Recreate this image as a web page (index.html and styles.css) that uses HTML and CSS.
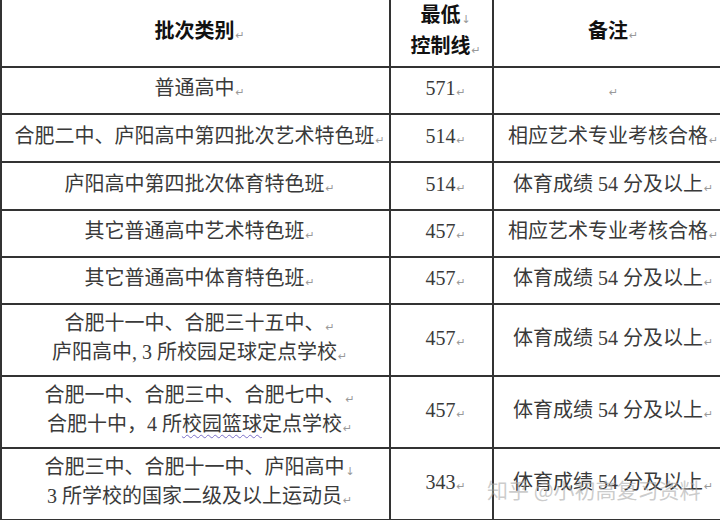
FILE: index.html
```html
<!DOCTYPE html>
<html lang="zh-CN">
<head>
<meta charset="utf-8">
<title>批次类别</title>
<link rel="stylesheet" href="styles.css">
</head>
<body>
<div class="page">
  <table class="grid">
    <colgroup><col class="c1"><col class="c2"><col class="c3"></colgroup>
    <tr class="r-head">
      <th>批次类别<span class="pm">↵</span></th>
      <th class="num">最低<span class="lb">↓</span><br>控制线<span class="pm">↵</span></th>
      <th>备注<span class="pm">↵</span></th>
    </tr>
    <tr class="r-s1">
      <td>普通高中<span class="pm">↵</span></td>
      <td class="num">571<span class="pm">↵</span></td>
      <td><span class="pm">↵</span></td>
    </tr>
    <tr class="r-s2">
      <td>合肥二中、庐阳高中第四批次艺术特色班<span class="pm">↵</span></td>
      <td class="num">514<span class="pm">↵</span></td>
      <td>相应艺术专业考核合格<span class="pm">↵</span></td>
    </tr>
    <tr class="r-s2">
      <td>庐阳高中第四批次体育特色班<span class="pm">↵</span></td>
      <td class="num">514<span class="pm">↵</span></td>
      <td>体育成绩 54 分及以上<span class="pm">↵</span></td>
    </tr>
    <tr class="r-s1">
      <td>其它普通高中艺术特色班<span class="pm">↵</span></td>
      <td class="num">457<span class="pm">↵</span></td>
      <td>相应艺术专业考核合格<span class="pm">↵</span></td>
    </tr>
    <tr class="r-s1">
      <td>其它普通高中体育特色班<span class="pm">↵</span></td>
      <td class="num">457<span class="pm">↵</span></td>
      <td>体育成绩 54 分及以上<span class="pm">↵</span></td>
    </tr>
    <tr class="r-d">
      <td class="two">合肥十一中、合肥三十五中、<span class="pm">↵</span><br>庐阳高中, 3 所校园足球定点学校<span class="pm">↵</span></td>
      <td class="num">457<span class="pm">↵</span></td>
      <td>体育成绩 54 分及以上<span class="pm">↵</span></td>
    </tr>
    <tr class="r-d">
      <td class="two">合肥一中、合肥三中、合肥七中、<span class="pm">↵</span><br>合肥十中，4 所<span class="wavy">校园篮球</span>定点学校<span class="pm">↵</span></td>
      <td class="num">457<span class="pm">↵</span></td>
      <td>体育成绩 54 分及以上<span class="pm">↵</span></td>
    </tr>
    <tr class="r-d">
      <td class="two">合肥三中、合肥十一中、庐阳高中<span class="lb">↓</span><br>3 所学校的国家二级及以上运动员<span class="pm">↵</span></td>
      <td class="num">343<span class="pm">↵</span></td>
      <td>体育成绩 54 分及以上<span class="pm">↵</span></td>
    </tr>
  </table>
  <div class="watermark">知乎 @小初高复习资料</div>
</div>
</body>
</html>
```
FILE: styles.css
```css
html, body {
  margin: 0;
  padding: 0;
  background: #fff;
}
body {
  width: 720px;
  height: 520px;
  overflow: hidden;
}
.page {
  position: relative;
  width: 720px;
  height: 520px;
  overflow: hidden;
}
.grid {
  border-collapse: collapse;
  table-layout: fixed;
  width: 724px;
  margin-top: -2px;
  font-family: "Liberation Serif", "Noto Sans CJK SC", serif;
  font-size: 20px;
  color: #3a3a3a;
}
.c1 { width: 389px; }
.c2 { width: 103px; }
.c3 { width: 232px; }
.grid th,
.grid td {
  border: 2px solid #333;
  padding: 0 0 0 8px;
  text-align: center;
  vertical-align: middle;
  white-space: nowrap;
  line-height: 24px;
}
.grid th {
  font-weight: 700;
  color: #111;
}
.grid td.two {
  line-height: 25px;
}
.r-head { height: 68px; }
.r-head th { line-height: 26px; }
.r-s1 { height: 47px; }
.r-s2 { height: 48px; }
.r-d { height: 72px; }
.pm,
.lb {
  font-family: "DejaVu Sans", sans-serif;
  font-size: 11px;
  font-weight: 400;
  color: #999;
  vertical-align: -1px;
  margin-left: 1px;
}
.wavy {
  text-decoration: underline wavy #7a6fc8;
  text-decoration-thickness: 1px;
  text-underline-offset: 3px;
}
.watermark {
  position: absolute;
  left: 487px;
  top: 474px;
  font-family: "Noto Sans CJK SC", sans-serif;
  font-size: 21px;
  color: rgba(170, 170, 170, 0.6);
  white-space: nowrap;
}
```
